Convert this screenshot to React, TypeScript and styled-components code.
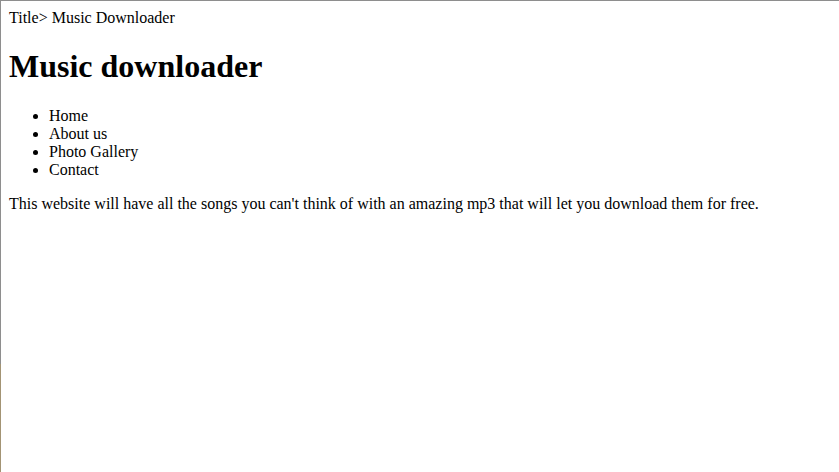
import styled, { createGlobalStyle } from "styled-components";

const GlobalStyle = createGlobalStyle`
  html, body {
    margin: 0;
    background: #fff;
  }
`;

const links = ["Home", "About us", "Photo Gallery", "Contact"];

const App = () => {
  return (
    <Frame>
      <GlobalStyle />
      <TitleLine>Title&gt; Music Downloader</TitleLine>
      <Heading>Music downloader</Heading>
      <NavList>
        {links.map((link) => (
          <NavItem key={link}>{link}</NavItem>
        ))}
      </NavList>
      <Intro>
        This website will have all the songs you can't think of with an amazing mp3 that will let
        you download them for free.
      </Intro>
    </Frame>
  );
};

const Frame = styled.div`
  box-sizing: border-box;
  height: 100vh;
  padding: 9px 8px 8px 9px;
  font-family: "Liberation Serif", "Times New Roman", serif;
  font-size: 16px;
  color: #000;
  background:
    linear-gradient(#8e8e8e, #8e8e8e) top left / 100% 1px no-repeat,
    linear-gradient(to bottom, #8e8e8e 364px, #a39474 364px) top left / 1px 100% no-repeat,
    #fff;
`;

const TitleLine = styled.div`
  line-height: normal;
`;

const Heading = styled.h1`
  font-size: 2em;
  font-weight: bold;
  margin: 0.67em 0;
`;

const NavList = styled.ul`
  margin: 16px 0;
  padding-left: 40px;
  list-style: disc;
`;

const NavItem = styled.li``;

const Intro = styled.p`
  margin: 16px 0;
`;

export default App;
